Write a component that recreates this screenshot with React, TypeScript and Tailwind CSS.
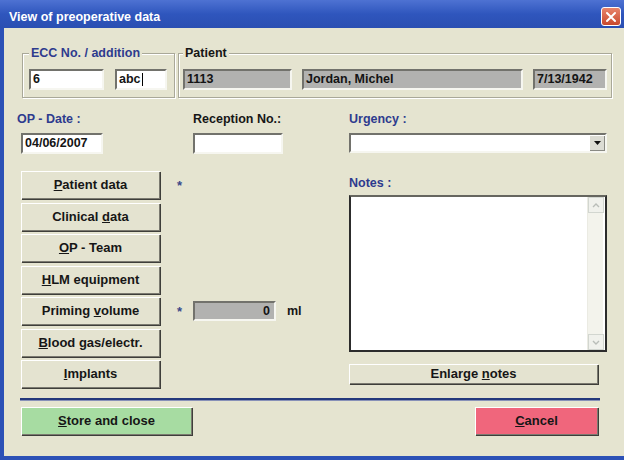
import React from 'react';

const sunken =
  'border-2 border-t-[#72726c] border-l-[#72726c] border-r-[#f6f6f0] border-b-[#f6f6f0]';

function Field({
  w,
  gray,
  right,
  children,
}: {
  w: string;
  gray?: boolean;
  right?: boolean;
  children?: React.ReactNode;
}) {
  return (
    <div
      className={`${w} h-[21px] ${sunken} flex items-center px-[2px] text-[12.5px] font-bold text-[#141414] leading-none ${
        gray ? 'bg-[#b2b2b0]' : 'bg-white'
      } ${right ? 'justify-end pr-[4px]' : ''}`}
    >
      {children}
    </div>
  );
}

function Btn({
  w,
  h = 'h-[28px]',
  bg = 'bg-[#e4e3d0]',
  children,
}: {
  w: string;
  h?: string;
  bg?: string;
  children: React.ReactNode;
}) {
  return (
    <button
      className={`${w} ${h} ${bg} shrink-0 flex items-center justify-center text-[13px] font-bold text-[#161616] shadow-[inset_1px_1px_0_#ffffff,inset_-1px_-1px_0_#7b7a70,1px_1px_0_#3e3e3a]`}
    >
      <span className="whitespace-pre">{children}</span>
    </button>
  );
}

function Label({ children, blue = true }: { children: React.ReactNode; blue?: boolean }) {
  return (
    <div
      className={`h-[15px] leading-[15px] text-[12.5px] font-bold ${
        blue ? 'text-[#2e3b8e]' : 'text-[#161616]'
      }`}
    >
      {children}
    </div>
  );
}

const legend = 'px-[2px] bg-[#e5e4d0] leading-[15px] text-[12.5px] font-bold';

export default function App() {
  const rows: { label: React.ReactNode; star?: boolean; extra?: boolean }[] = [
    { label: <><u>P</u>atient data</>, star: true },
    { label: <>Clinical <u>d</u>ata</> },
    { label: <><u>O</u>P - Team</> },
    { label: <><u>H</u>LM equipment</> },
    { label: <>Priming <u>v</u>olume</>, star: true, extra: true },
    { label: <><u>B</u>lood gas/electr.</> },
    { label: <><u>I</u>mplants</> },
  ];

  return (
    <div className="w-[624px] h-[460px] overflow-hidden bg-[#2c51b6] flex flex-col font-['Liberation_Sans',Arial,sans-serif]">
      {/* title bar */}
      <div className="h-[28px] shrink-0 flex items-start bg-linear-to-b from-[#4e72d2] via-[#2f56bd] to-[#2a4fb2]">
        <div className="pl-[9px] pt-[10px] leading-[15px] text-[12.5px] font-bold text-white">
          View of preoperative data
        </div>
        <div className="ml-auto mr-[3px] mt-[7px] w-[20px] h-[19px] rounded-[3px] border border-white bg-linear-to-b from-[#e8846a] to-[#c8482c] flex items-center justify-center">
          <svg width="12" height="12" viewBox="0 0 12 12">
            <path d="M2 2 L10 10 M10 2 L2 10" stroke="white" strokeWidth="2" strokeLinecap="round" />
          </svg>
        </div>
      </div>

      <div className="flex-1 flex mb-[4px] ml-[4px]">
        <div className="flex-1 bg-[#e5e4d0] flex flex-col pl-[13px] pt-[18px]">
          {/* group boxes */}
          <div className="flex gap-[3px] ml-[5px]">
            <fieldset className="w-[153px] border border-[#a9a898] shadow-[inset_1px_1px_0_#ffffff,1px_1px_0_#ffffff] pl-[6px] pt-[8px] pb-[7px]">
              <legend className={`${legend} text-[#2e3b8e]`}>ECC No. / addition</legend>
              <div className="flex gap-[11px]">
                <Field w="w-[75px]">6</Field>
                <Field w="w-[52px]">
                  abc<span className="w-px h-[13px] bg-black ml-[1px]" />
                </Field>
              </div>
            </fieldset>
            <fieldset className="w-[434px] border border-[#a9a898] shadow-[inset_1px_1px_0_#ffffff,1px_1px_0_#ffffff] pl-[4px] pt-[8px] pb-[7px]">
              <legend className={`${legend} text-[#161616]`}>Patient</legend>
              <div className="flex gap-[10px]">
                <Field w="w-[109px]" gray>1113</Field>
                <Field w="w-[221px]" gray>Jordan, Michel</Field>
                <Field w="w-[74px]" gray>7/13/1942</Field>
              </div>
            </fieldset>
          </div>

          {/* date / reception / urgency */}
          <div className="flex items-start mt-[14px]">
            <div className="w-[176px] flex flex-col">
              <Label>OP - Date :</Label>
              <div className="ml-[4px] mt-[6px]">
                <Field w="w-[82px]">04/06/2007</Field>
              </div>
            </div>
            <div className="w-[156px] flex flex-col">
              <Label blue={false}>Reception No.:</Label>
              <div className="mt-[6px]">
                <Field w="w-[90px]" />
              </div>
            </div>
            <div className="w-[258px] flex flex-col">
              <Label>Urgency :</Label>
              <div className={`mt-[6px] w-[258px] h-[20px] ${sunken} bg-white flex justify-end`}>
                <div className="w-[16px] h-[16px] bg-[#dcdcd4] shadow-[inset_1px_1px_0_#ffffff,inset_-1px_-1px_0_#8a8a84] flex items-center justify-center">
                  <svg width="7" height="4" viewBox="0 0 7 4">
                    <path d="M0 0 H7 L3.5 4 Z" fill="#111" />
                  </svg>
                </div>
              </div>
            </div>
          </div>

          {/* buttons + notes */}
          <div className="flex items-start mt-[17px]">
            <div className="w-[332px] flex flex-col gap-[3.5px]">
              {rows.map((r, i) => (
                <div key={i} className="flex items-center h-[28px]">
                  <div className="ml-[4px]">
                    <Btn w="w-[139px]">{r.label}</Btn>
                  </div>
                  <div className="w-[33px] pl-[17px] text-[13px] font-bold text-[#3a4888] leading-none">
                    {r.star ? '*' : ''}
                  </div>
                  {r.extra && (
                    <div className="flex items-center">
                      <div className={`w-[83px] h-[20px] ${sunken} bg-[#b2b2b0] flex items-center justify-end pr-[4px] text-[12.5px] font-bold text-[#141414]`}>
                        0
                      </div>
                      <span className="ml-[11px] text-[12.5px] font-bold text-[#161616]">ml</span>
                    </div>
                  )}
                </div>
              ))}
            </div>

            <div className="w-[258px] flex flex-col mt-[5px]">
              <Label>Notes :</Label>
              <div className="mt-[4px] h-[157px] border-2 border-[#2c2c2c] border-t-[#66665f] bg-white flex justify-end pr-[2px]">
                <div className="w-[16px] h-full bg-[#f3f3ec] border-l border-[#ebebe3] flex flex-col justify-between">
                  <div className="w-[16px] h-[16px] border border-[#d2d6d0] bg-[#f0f1ec] flex items-center justify-center">
                    <svg width="8" height="5" viewBox="0 0 8 5">
                      <path d="M1 4 L4 1 L7 4" stroke="#b9bdb8" strokeWidth="1.4" fill="none" />
                    </svg>
                  </div>
                  <div className="w-[16px] h-[16px] border border-[#d2d6d0] bg-[#f0f1ec] flex items-center justify-center">
                    <svg width="8" height="5" viewBox="0 0 8 5">
                      <path d="M1 1 L4 4 L7 1" stroke="#b9bdb8" strokeWidth="1.4" fill="none" />
                    </svg>
                  </div>
                </div>
              </div>
              <div className="mt-[12px]">
                <Btn w="w-[249px]" h="h-[20px]">
                  Enlarge <u>n</u>otes
                </Btn>
              </div>
            </div>
          </div>

          {/* separator */}
          <div className="mt-[10px] ml-[3px] w-[580px] h-[3px] border-t-2 border-[#24397c] border-b border-b-[#8891b8]" />

          {/* bottom buttons */}
          <div className="mt-[6px] ml-[4px] w-[577px] flex justify-between">
            <Btn w="w-[171px]" bg="bg-[#a7dca2]">
              <u>S</u>tore and close
            </Btn>
            <Btn w="w-[123px]" bg="bg-[#f0667c]">
              <u>C</u>ancel
            </Btn>
          </div>
        </div>
      </div>
    </div>
  );
}
